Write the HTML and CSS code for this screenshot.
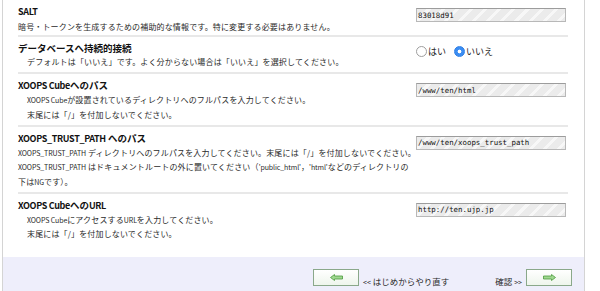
FILE: index.html
```html
<!DOCTYPE html>
<html lang="ja">
<head>
<meta charset="utf-8">
<title>XOOPS Cube インストール</title>
<link rel="stylesheet" href="styles.css">
</head>
<body>
<div class="panel">
  <div class="row first">
    <div class="info">
      <div class="title"><span class="tl">SALT</span></div>
      <div class="desc">暗号・トークンを生成するための補助的な情報です。特に変更する必要はありません。</div>
    </div>
    <div class="field"><input class="text" type="text" value="83018d91" readonly></div>
  </div>
  <div class="row">
    <div class="info">
      <div class="title">データベースへ持続的接続</div>
      <div class="desc indent">デフォルトは「いいえ」です。よく分からない場合は「いいえ」を選択してください。</div>
    </div>
    <div class="field choices">
      <span class="opt"><span class="radio"></span>はい</span>
      <span class="opt"><span class="radio on"></span>いいえ</span>
    </div>
  </div>
  <div class="row">
    <div class="info">
      <div class="title"><span class="tl">XOOPS Cube</span>へのパス</div>
      <div class="desc indent"><span class="en">XOOPS Cube</span>が設置されているディレクトリへのフルパスを入力してください。<br>末尾には「/」を付加しないでください。</div>
    </div>
    <div class="field"><input class="text" type="text" value="/www/ten/html" readonly></div>
  </div>
  <div class="row">
    <div class="info">
      <div class="title"><span class="tl">XOOPS_TRUST_PATH</span> へのパス</div>
      <div class="desc"><span class="en">XOOPS_TRUST_PATH</span> ディレクトリへのフルパスを入力してください。末尾には「/」を付加しないでください。<br><span class="en">XOOPS_TRUST_PATH</span> はドキュメントルートの外に置いてください（<span class="en">'public_html'</span>，<span class="en">'html'</span>などのディレクトリの<br>下は<span class="en">NG</span>です）。</div>
    </div>
    <div class="field"><input class="text" type="text" value="/www/ten/xoops_trust_path" readonly></div>
  </div>
  <div class="row last">
    <div class="info">
      <div class="title"><span class="tl">XOOPS Cube</span>への<span class="tl">URL</span></div>
      <div class="desc indent"><span class="en">XOOPS Cube</span>にアクセスする<span class="en">URL</span>を入力してください。<br>末尾には「/」を付加しないでください。</div>
    </div>
    <div class="field"><input class="text" type="text" value="http://ten.ujp.jp" readonly></div>
  </div>
  <div class="footer">
    <div class="nav">
      <span class="btn"><svg width="13" height="7" viewBox="0 0 13 7"><polygon points="0.5,3.5 4.5,0.5 4.5,2 12.5,2 12.5,5 4.5,5 4.5,6.5" fill="#9fd890" stroke="#4b9a3e" stroke-width="0.8"/></svg></span>
      <span class="label"><span class="chev">&lt;&lt;</span> はじめからやり直す</span>
    </div>
    <div class="nav next">
      <span class="label">確認 <span class="chev">&gt;&gt;</span></span>
      <span class="btn"><svg width="13" height="7" viewBox="0 0 13 7"><polygon points="12.5,3.5 8.5,0.5 8.5,2 0.5,2 0.5,5 8.5,5 8.5,6.5" fill="#9fd890" stroke="#4b9a3e" stroke-width="0.8"/></svg></span>
    </div>
  </div>
</div>
</body>
</html>
```
FILE: styles.css
```css
html, body {
  margin: 0;
  background: #fff;
}
body {
  font-family: "Noto Sans CJK JP", "Noto Sans", sans-serif;
  color: #222;
}
.panel {
  margin-left: 2px;
  width: 581px;
  min-height: 291px;
  border-left: 1px solid #d4d4d4;
  border-right: 1px solid #d4d4d4;
  display: flex;
  flex-direction: column;
}
.row {
  display: flex;
  margin: 0 16px 0 15px;
  padding: 4px 0 2.5px;
  border-bottom: 2px solid #e8e8e8;
}
.row.first {
  padding-bottom: 0.5px;
}
.row.last {
  border-bottom: 0;
  padding-bottom: 15px;
}
.info {
  flex: 1;
  min-width: 0;
}
.title {
  font-size: 9.5px;
  font-weight: 700;
  line-height: 14px;
  color: #111;
  white-space: nowrap;
}
.tl {
  font-size: 9px;
  letter-spacing: -0.35px;
}
.desc {
  font-size: 8px;
  line-height: 14.5px;
  letter-spacing: 0.15px;
  color: #2a2a2a;
  white-space: nowrap;
}
.first .desc {
  padding-top: 1px;
}
.desc.indent {
  padding-left: 9px;
}
.en {
  font-size: 7px;
  letter-spacing: -0.1px;
}
.field {
  flex: none;
  width: 150px;
  margin: 5px 2px 0 0;
}
.first .field {
  margin-top: 4px;
}
.text {
  display: block;
  box-sizing: border-box;
  width: 150px;
  height: 14px;
  margin: 0;
  padding: 0 1px;
  border: 1px solid #b8b8b8;
  border-top-color: #9c9c9c;
  border-radius: 0;
  background: repeating-linear-gradient(135deg, #ebebeb 0 7px, #f7f7f7 7px 10px);
  font-family: "DejaVu Sans Mono", "Liberation Mono", monospace;
  font-size: 7.4px;
  color: #111;
  outline: none;
}
.choices {
  display: flex;
  align-items: center;
  height: 14px;
  margin-top: 3px;
  margin-left: -1px;
  font-size: 9px;
  color: #222;
}
.opt {
  display: flex;
  align-items: center;
  gap: 1px;
}
.opt + .opt {
  margin-left: 8px;
}
.radio {
  width: 11px;
  height: 11px;
  box-sizing: border-box;
  border-radius: 50%;
  border: 1px solid #9e9e9e;
  background: #fff;
}
.radio.on {
  border-color: #2f7fe6;
  background: radial-gradient(circle, #fff 0 1.6px, #3b8df2 2.2px);
}
.footer {
  flex: 1;
  background: #eeeefb;
  display: flex;
  align-items: flex-start;
  padding: 12px 12px 0 310px;
}
.nav {
  display: flex;
  align-items: flex-end;
  gap: 4px;
}
.next {
  margin-left: auto;
}
.btn {
  width: 46px;
  height: 17px;
  box-sizing: border-box;
  border: 1px solid #8aa88a;
  background: linear-gradient(#ffffff, #eef5ec);
  display: flex;
  align-items: center;
  justify-content: center;
}
.label {
  font-size: 8.5px;
  line-height: 9px;
  margin-bottom: -1px;
  color: #2a2a2a;
  white-space: nowrap;
}
.chev {
  font-size: 7px;
}
```
